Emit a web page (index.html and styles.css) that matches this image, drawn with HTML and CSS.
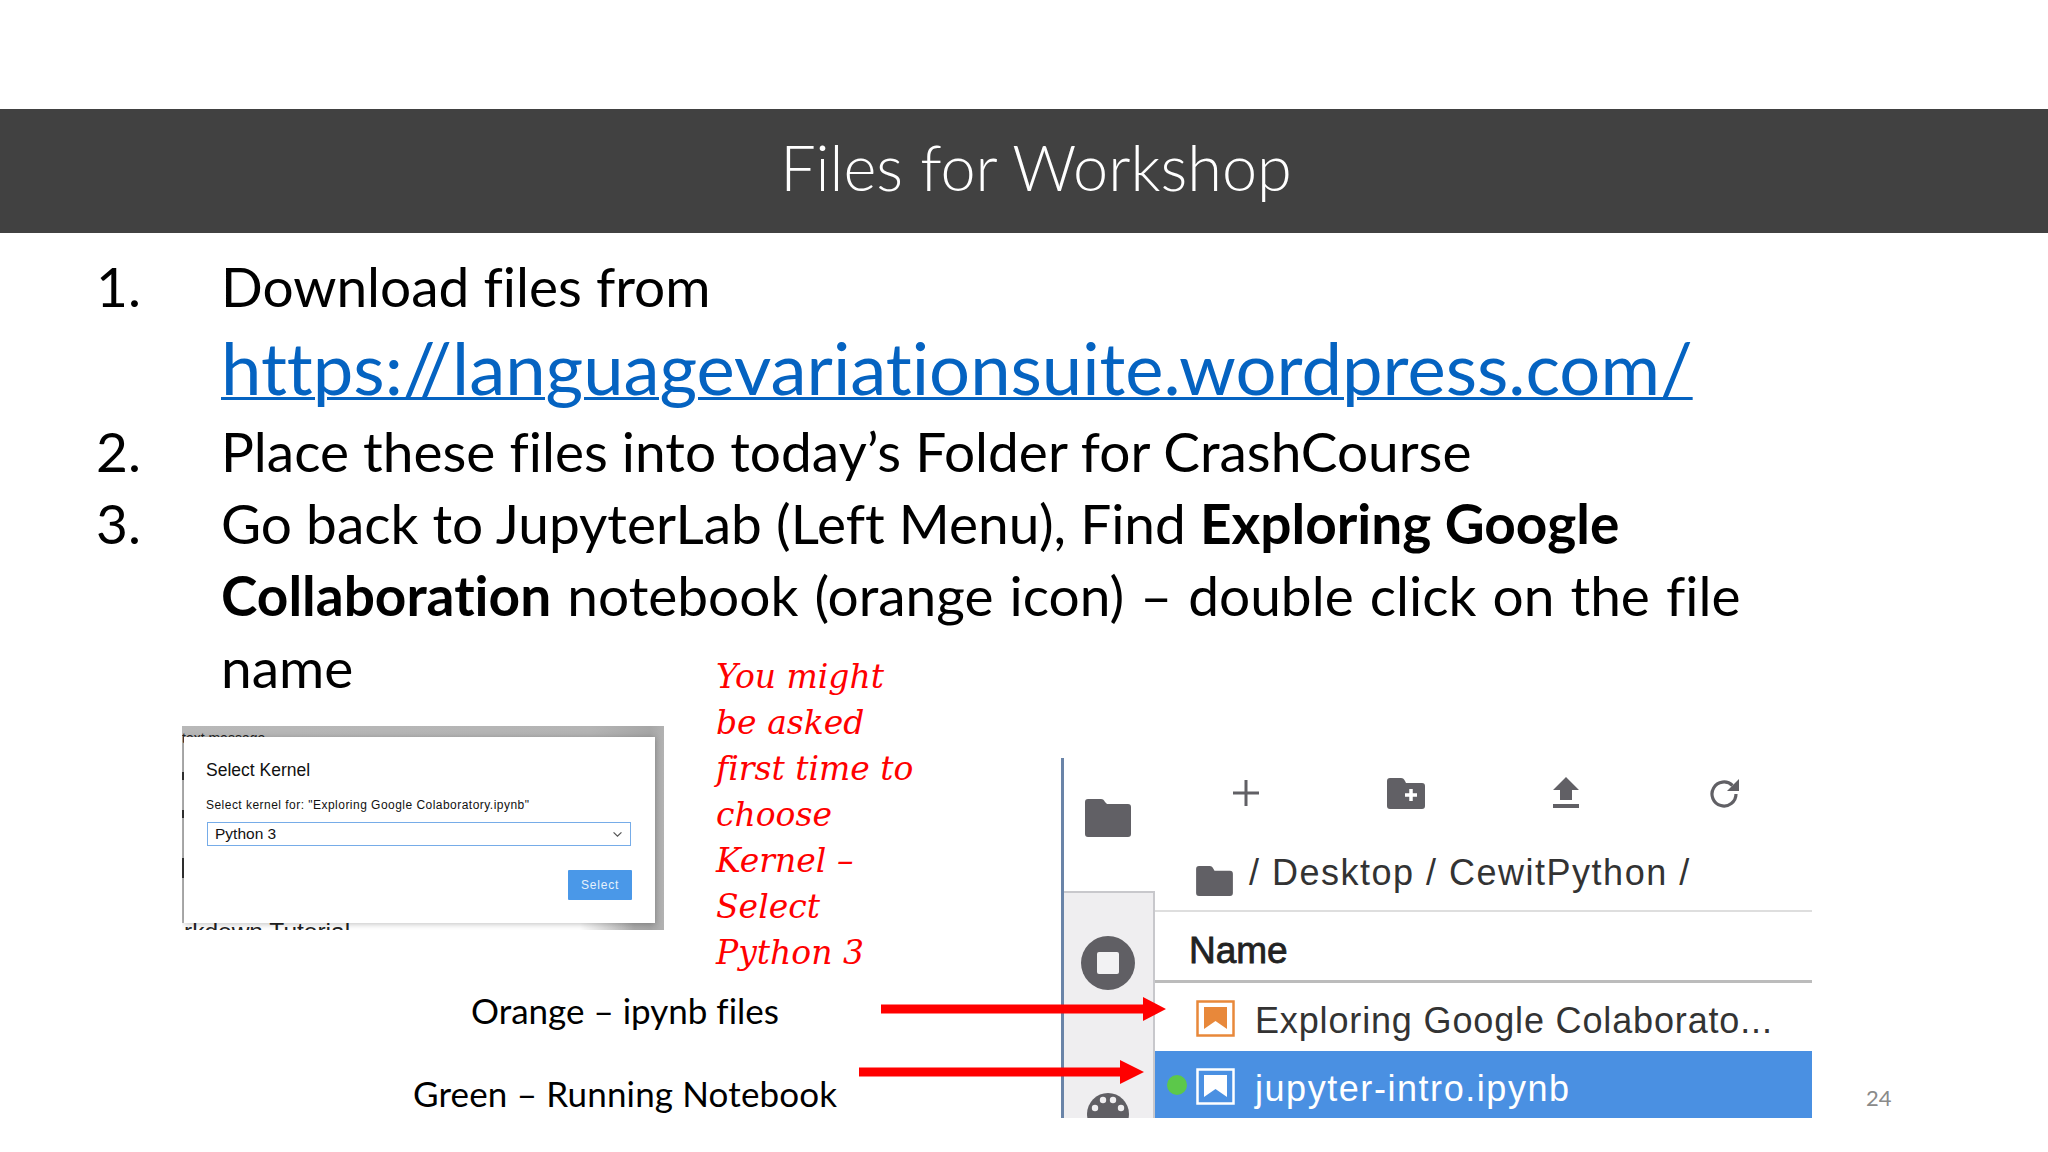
FILE: index.html
```html
<!DOCTYPE html>
<html lang="en">
<head>
<meta charset="utf-8">
<title>Files for Workshop</title>
<link rel="stylesheet" href="styles.css">
</head>
<body>
<div class="slide">
  <header class="banner"><h1 class="banner-title">Files for Workshop</h1></header>

  <ol class="steps">
    <li class="step">
      <span class="step-num">1.</span>
      <div class="step-body">
        <p class="step-line">Download files from</p>
        <p class="step-url"><a class="url-link" href="#">https://languagevariationsuite.wordpress.com/</a></p>
      </div>
    </li>
    <li class="step">
      <span class="step-num">2.</span>
      <div class="step-body"><p class="step-line">Place these files into today’s Folder for CrashCourse</p></div>
    </li>
    <li class="step">
      <span class="step-num">3.</span>
      <div class="step-body">
        <p class="step-line">Go back to JupyterLab (Left Menu), Find <b>Exploring Google</b></p>
        <p class="step-line step-line-wide"><b>Collaboration</b> notebook (orange icon) – double click on the file</p>
        <p class="step-line">name</p>
      </div>
    </li>
  </ol>

  <div class="shot-kernel">
    <span class="behind behind-top">text message</span>
    <span class="behind behind-bottom">rkdown Tutorial</span>
    <span class="behind-tick tick-a"></span>
    <span class="behind-tick tick-b"></span>
    <span class="behind-tick tick-c"></span>
    <div class="dialog">
      <div class="dialog-title">Select Kernel</div>
      <div class="dialog-sub">Select kernel for: "Exploring Google Colaboratory.ipynb"</div>
      <div class="dialog-select">
        <span>Python 3</span>
        <svg class="chev" viewBox="0 0 12 8"><path d="M1.5 1.5 6 6l4.500-4.500" fill="none" stroke="#555" stroke-width="1.400"/></svg>
      </div>
      <div class="dialog-actions"><span class="dialog-btn">Select</span></div>
    </div>
  </div>

  <div class="note">
    <span class="note-line">You might</span>
    <span class="note-line">be asked</span>
    <span class="note-line">first time to</span>
    <span class="note-line">choose</span>
    <span class="note-line">Kernel –</span>
    <span class="note-line">Select</span>
    <span class="note-line">Python 3</span>
  </div>

  <div class="shot-files">
    <aside class="side">
      <div class="side-top">
        <svg class="ic-side-folder" viewBox="0 0 46 38"><path d="M3 0h13c2 0 3 1 4 3l2 2h21c2 0 3 1 3 3v27c0 2-1 3-3 3H3c-2 0-3-1-3-3V3c0-2 1-3 3-3z" fill="#616065"/></svg>
      </div>
      <div class="side-bottom">
        <svg class="ic-stop" viewBox="0 0 54 54"><circle cx="27" cy="27" r="27" fill="#605f64"/><rect x="16" y="16" width="22" height="22" rx="2" fill="#f2f2f3"/></svg>
        <svg class="ic-palette" viewBox="0 0 42 42"><circle cx="21" cy="21" r="21" fill="#605f64"/><circle cx="8" cy="15" r="3.200" fill="#efeef0"/><circle cx="16" cy="7" r="3.200" fill="#efeef0"/><circle cx="26" cy="7" r="3.200" fill="#efeef0"/><circle cx="34" cy="15" r="3.200" fill="#efeef0"/></svg>
      </div>
    </aside>
    <div class="browser">
      <div class="tools">
        <svg class="tool" viewBox="0 0 32 32"><path d="M16 3v26M3 16h26" stroke="#616065" stroke-width="3" fill="none"/></svg>
        <svg class="tool tool-folder" viewBox="0 0 38 31"><path d="M3 0h11c2 0 3 1 4 3l1 2h16c2 0 3 1 3 3v20c0 2-1 3-3 3H3c-2 0-3-1-3-3V3c0-2 1-3 3-3z" fill="#616065"/><path d="M24 11v12M18 17h12" stroke="#fff" stroke-width="3.500"/></svg>
        <svg class="tool" viewBox="0 0 32 32"><path d="M16 0 29 13h-7v10H10V13H3z" fill="#616065"/><rect x="3" y="27" width="26" height="4" fill="#616065"/></svg>
        <svg class="tool" viewBox="0 0 32 32"><path d="M27 17a12 12 0 1 1-3.500-8.500" fill="none" stroke="#616065" stroke-width="3.200"/><path d="M30 2v12H18z" fill="#616065"/></svg>
      </div>
      <div class="crumbs">
        <svg class="ic-crumb" viewBox="0 0 38 31"><path d="M3 0h11c2 0 3 1 4 3l1 2h16c2 0 3 1 3 3v20c0 2-1 3-3 3H3c-2 0-3-1-3-3V3c0-2 1-3 3-3z" fill="#616065"/></svg>
        <span class="crumb-text">/ Desktop / CewitPython /</span>
      </div>
      <div class="col-head">Name</div>
      <div class="row">
        <svg class="ic-nb" viewBox="0 0 39 37"><rect x="1.500" y="1.500" width="36" height="34" fill="none" stroke="#e8883a" stroke-width="2.500"/><path d="M8 7h23v22l-11.500-8L8 29z" fill="#e8883a"/></svg>
        <span class="row-text row-text-a">Exploring Google Colaborato...</span>
      </div>
      <div class="row row-active">
        <span class="dot"></span>
        <svg class="ic-nb" viewBox="0 0 39 37"><rect x="1.500" y="1.500" width="36" height="34" fill="none" stroke="#fff" stroke-width="2.500"/><path d="M8 7h23v22l-11.500-8L8 29z" fill="#fff"/></svg>
        <span class="row-text row-text-b">jupyter-intro.ipynb</span>
      </div>
    </div>
  </div>

  <span class="label label-orange">Orange – ipynb files</span>
  <span class="label label-green">Green – Running Notebook</span>
  <svg class="arrow arrow-orange" viewBox="0 0 285 24"><path d="M0 7.500h262V0l23 12-23 12v-7.500H0z" fill="#f00"/></svg>
  <svg class="arrow arrow-green" viewBox="0 0 285 24"><path d="M0 7.500h261V0l24 12-24 12v-7.500H0z" fill="#f00"/></svg>
  <span class="page-num">24</span>
</div>
</body>
</html>
```

FILE: styles.css
```css
* { box-sizing: border-box; }
html, body { margin: 0; padding: 0; background: #fff; }
.slide {
  position: relative;
  width: 2048px;
  height: 1152px;
  overflow: hidden;
  background: #fff;
  font-family: Lato, "Open Sans", sans-serif;
  font-variant-ligatures: none;
  color: #000;
  padding-top: 109px;
}

/* Banner */
.banner {
  height: 124px;
  background: #414141;
  display: flex;
  align-items: center;
  justify-content: center;
  padding: 0 0 10px 24px;
}
.banner-title {
  margin: 0;
  font-size: 63px;
  font-weight: 300;
  color: #fff;
  line-height: 1;
}

/* Numbered list */
.steps {
  list-style: none;
  margin: 0;
  padding: 17px 0 0 96px;
  display: flex;
  flex-direction: column;
}
.step {
  display: grid;
  grid-template-columns: 125px 1fr;
}
.step-num { font-size: 55px; line-height: 72px; }
.step-line {
  margin: 0;
  font-size: 55px;
  line-height: 72px;
  white-space: nowrap;
}
.step-line-wide { word-spacing: 2px; }
.step-url {
  margin: 4px 0 7px;
  font-size: 72.4px;
  line-height: 82px;
  white-space: nowrap;
}
.url-link { color: #0563c1; text-decoration: underline; text-decoration-thickness: 3px; }

/* Kernel dialog screenshot */
.shot-kernel {
  position: absolute;
  left: 182px;
  top: 726px;
  width: 482px;
  height: 204px;
  overflow: hidden;
  background: linear-gradient(90deg, #b8b8b8 0%, #b4b4b4 85%, #a6a6a6 97%, #b2b2b2 100%);
}
.shot-kernel::after {
  content: "";
  position: absolute;
  left: 0;
  bottom: 0;
  width: 452px;
  height: 7px;
  background: linear-gradient(90deg, #fff 88%, rgba(255, 255, 255, 0) 100%);
}
.behind { position: absolute; font-family: "Liberation Sans", sans-serif; color: #222; white-space: nowrap; }
.behind-top { left: 0; top: 5px; font-size: 14px; line-height: 14px; }
.behind-bottom { left: 2px; top: 192px; font-size: 24.5px; line-height: 28px; z-index: 1; }
.behind-tick { position: absolute; left: 0; width: 2px; background: #333; }
.tick-a { top: 46px; height: 8px; }
.tick-b { top: 84px; height: 8px; }
.tick-c { top: 132px; height: 20px; }
.dialog {
  position: absolute;
  left: 2px;
  top: 11px;
  width: 471px;
  height: 186px;
  background: #fff;
  box-shadow: 0 1px 6px rgba(0, 0, 0, .25);
  padding: 23px 22px 0 22px;
  font-family: "Liberation Sans", sans-serif;
  color: #111;
  z-index: 2;
}
.dialog-title { font-size: 17.5px; line-height: 20px; }
.dialog-sub { margin-top: 18px; font-size: 12px; line-height: 15px; letter-spacing: .47px; white-space: nowrap; }
.dialog-select {
  margin: 9px 0 0 1px;
  width: 424px;
  height: 24px;
  border: 1.500px solid #76ace8;
  padding: 0 7px;
  display: flex;
  align-items: center;
  justify-content: space-between;
  font-size: 15.5px;
}
.chev { width: 11px; height: 7px; }
.dialog-actions { margin-top: 24px; display: flex; justify-content: flex-end; padding-right: 1px; }
.dialog-btn {
  width: 64px;
  height: 30px;
  background: #4a98e8;
  border-radius: 1px;
  color: #e6f1fc;
  font-size: 12px;
  letter-spacing: .8px;
  display: flex;
  align-items: center;
  justify-content: center;
}

/* Handwritten note */
.note {
  position: absolute;
  left: 716px;
  top: 654px;
  display: flex;
  flex-direction: column;
  font-family: "DejaVu Serif", "Liberation Serif", serif;
  font-style: italic;
  color: #f00;
  font-size: 33px;
  line-height: 46px;
}
.note-line { white-space: nowrap; }

/* File browser screenshot */
.shot-files {
  position: absolute;
  left: 1061px;
  top: 758px;
  width: 751px;
  height: 360px;
  overflow: hidden;
  display: grid;
  grid-template-columns: 91px 1fr;
  border-left: 3px solid #6a84a8;
  background: #fff;
}
.side { display: flex; flex-direction: column; }
.side-top { height: 133px; padding: 41px 0 0 21px; }
.ic-side-folder { display: block; width: 46px; height: 38px; }
.side-bottom {
  flex: 1;
  background: #efeef0;
  border-top: 2.500px solid #c8c8cc;
  border-right: 2.500px solid #c8c8cc;
  display: flex;
  flex-direction: column;
  align-items: center;
  padding: 43px 2px 0 0;
  gap: 103px;
  overflow: hidden;
}
.ic-stop { width: 54px; height: 54px; flex: none; }
.ic-palette { width: 42px; height: 42px; flex: none; }
.browser { display: flex; flex-direction: column; font-family: "Liberation Sans", sans-serif; color: #333; }
.tools {
  height: 70px;
  padding-left: 10px;
  display: grid;
  grid-template-columns: 161px 160px 159px 160px;
  justify-items: center;
  align-items: center;
  flex: none;
}
.tool { width: 32px; height: 32px; }
.tool-folder { width: 38px; height: 31px; }
.crumbs {
  height: 84px;
  padding: 7px 0 0 41px;
  border-bottom: 2.500px solid #dedede;
  display: flex;
  align-items: center;
  gap: 16px;
  flex: none;
}
.ic-crumb { width: 37px; height: 30px; margin-top: 16px; }
.crumb-text { font-size: 36px; line-height: 40px; white-space: nowrap; letter-spacing: 1.5px; }
.col-head {
  height: 71px;
  padding-left: 34px;
  border-bottom: 3px solid #bcbcbc;
  font-size: 37px;
  line-height: 77px;
  font-weight: 400;
  -webkit-text-stroke: .8px #222;
  color: #222;
  flex: none;
}
.row {
  height: 68px;
  padding-left: 41px;
  display: flex;
  align-items: center;
  gap: 20px;
  position: relative;
  flex: none;
}
.ic-nb { width: 39px; height: 37px; flex: none; margin-top: 3px; }
.row-text { font-size: 36px; line-height: 40px; white-space: nowrap; margin-top: 8px; }
.row-text-a { letter-spacing: .85px; }
.row-text-b { letter-spacing: 1.55px; }
.row-active { height: 67px; background: #4a90e2; color: #fff; }
.dot {
  position: absolute;
  left: 12px;
  top: 24px;
  width: 20px;
  height: 20px;
  border-radius: 50%;
  background: #5cc84a;
}

/* Callouts */
.label { position: absolute; font-size: 35px; line-height: 40px; white-space: nowrap; }
.label-orange { left: 471px; top: 990px; }
.label-green { left: 413px; top: 1073px; letter-spacing: .15px; }
.arrow { position: absolute; width: 285px; height: 24px; }
.arrow-orange { left: 881px; top: 997px; }
.arrow-green { left: 859px; top: 1060px; }
.page-num { position: absolute; left: 1866px; top: 1084px; font-size: 22px; line-height: 28px; color: #8a8a8a; }
```
